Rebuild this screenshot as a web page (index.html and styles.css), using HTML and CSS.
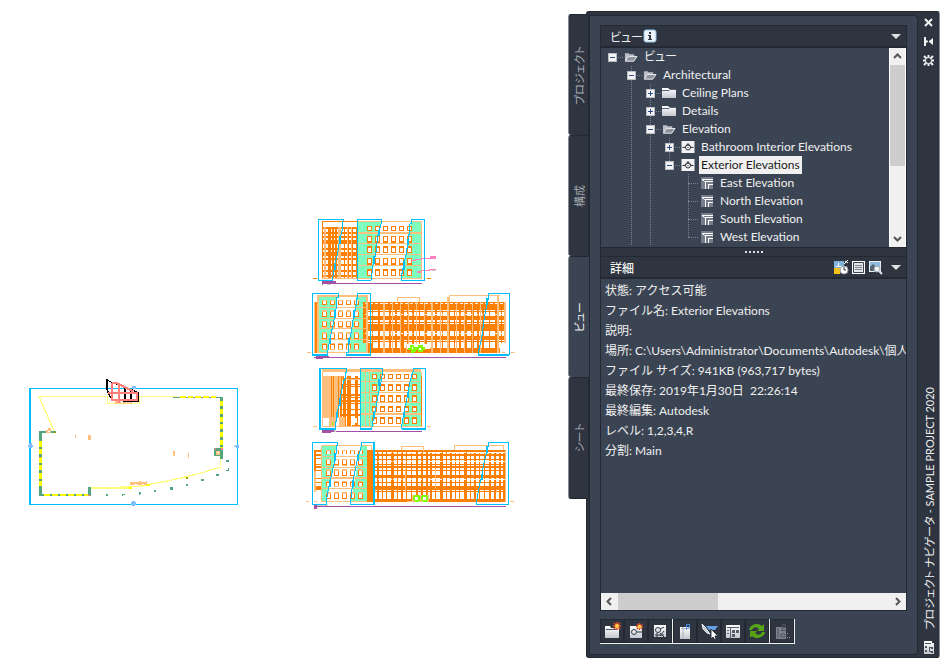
FILE: index.html
```
<!DOCTYPE html>
<html lang="ja">
<head>
  <meta charset="UTF-8">
  <meta name="viewport" content="width=device-width, initial-scale=1">
  <title>プロジェクト ナビゲータ - SAMPLE PROJECT 2020</title>
  <link rel="stylesheet" href="styles.css">
</head>
<body>

  <!-- shared icons -->
  <svg class="defs" width="0" height="0" aria-hidden="true">
    <linearGradient id="silver" x1="0" y1="0" x2="0" y2="1">
      <stop offset="0" stop-color="#fff"/>
      <stop offset="1" stop-color="#c4c8ce"/>
    </linearGradient>
    <symbol id="folder-open" viewBox="0 0 15 12">
      <path d="M1 10V2h4l1 1h5v2H5L2 10z" fill="#b9bec6"/>
      <path d="M1.500 10.500L4.500 5.500H14L10.500 10.500z" fill="#8d949f" stroke="#f0f1f3"/>
    </symbol>
    <symbol id="folder" viewBox="0 0 14 12">
      <path d="M0 1h6l1 1h7v9H0z" fill="url(#silver)"/>
      <path d="M0 3.500h7l1-1h6" stroke="#5b6370" fill="none"/>
    </symbol>
    <symbol id="view" viewBox="0 0 13 12">
      <path d="M0 0h13v12H0z" fill="#f2f2f2"/>
      <path d="M1 6.500h11" stroke="#2e3440"/>
      <path d="M3 6L6.500 2 10 6z" fill="#2e3440"/>
      <circle cx="6.500" cy="6.500" r="2.500" fill="#f2f2f2" stroke="#2e3440"/>
      <path d="M6 6h1v1H6z" fill="#2e3440"/>
    </symbol>
    <symbol id="named-view" viewBox="0 0 14 12">
      <path d="M1 0h12v12H1z" fill="#757d8a"/>
      <path d="M2 2h11v1H4v1h9v1H6v7H5V5L2 3zM8 7h5v1H9v4H8z" fill="#fff"/>
    </symbol>
    <symbol id="spark" viewBox="0 0 8 8">
      <path d="M4 0v8M0 4h8M1 1l6 6M7 1L1 7" stroke="#e8502a" stroke-width="1.500"/>
      <circle cx="4" cy="4" r="2" fill="#ffd24a"/>
    </symbol>

    <!-- rows of windows used by the elevations -->
    <symbol id="windows6" viewBox="0 0 140 24" overflow="visible" preserveAspectRatio="none">
      <path d="M1 12H140" stroke="#ff7f00" stroke-width="21" stroke-dasharray="15 9"/>
      <path d="M4 13H137" stroke="#fff" stroke-width="12" stroke-dasharray="9 15"/>
    </symbol>
    <symbol id="windows5" viewBox="0 0 116 24" overflow="visible" preserveAspectRatio="none">
      <path d="M1 12H116" stroke="#ffbf7f" stroke-width="21" stroke-dasharray="15 9"/>
      <path d="M1 14H116" stroke="#ff7f00" stroke-width="15" stroke-dasharray="15 9"/>
      <path d="M4 13H113" stroke="#fff" stroke-width="12" stroke-dasharray="9 15"/>
    </symbol>
  </svg>

  <main class="canvas">
    <svg class="plan" viewBox="0 0 690 435" role="img" aria-label="平面図">
      <path d="M55 80H265M357 80H470M57 80L104 187M602 265V291Q500 325 360 348" class="ly" stroke-width="4"/>
      <path d="M210 354H335M300 349H372" class="ly" stroke-width="5"/>
      <path d="M327 354H336M379 344H389M497 324H503" class="yl" stroke-width="6"/>
      <path d="M460 82H606" class="gr" stroke-width="4"/>
      <path d="M480 80H595" class="yl" stroke-width="5" stroke-dasharray="17 6"/>
      <path d="M604 80V268M592 234V258" class="gr" stroke-width="9"/>
      <path d="M582 246H600" class="gr" stroke-width="24"/>
      <path d="M604 94V234" class="yl" stroke-width="9" stroke-dasharray="15 8"/>
      <path d="M61 185V377M208 350V377" class="gr" stroke-width="9"/>
      <path d="M57 186H107M57 375H212" class="gr" stroke-width="6"/>
      <path d="M61 213V350" class="yl" stroke-width="9" stroke-dasharray="18 6 16 8"/>
      <path d="M72 375H205" class="yl" stroke-width="5" stroke-dasharray="17 7"/>
      <path d="M258 372h6v6h-6zM306 372h9v3h-6v3h-3zM357 366h6v6h-3v3h-3zM402 360h6v6h-6zM450 351h9v9h-9zM498 342h6v6h-6zM543 327h9v6h-9zM588 312h9v6h-9zM618 270h9v6h-9zM624 294h3v9h-9v-3h6z" fill="#55a57f"/>
      <path d="M84 174h9v14H78v-9h6zM165 195h3v9h-3zM204 195h9v15h-9zM459 243h6v15h-6zM504 249h3v15h-3zM588 243h12v12h-12zM330 336h27v-3h6v3h15v-3h3v12h-9v-4h-6v4h-15v-3h-6v3h-15z" fill="#ffbf7f"/>
      <path d="M591 246h6v3h-6zM84 183h6v3h-6z" fill="#fff"/>
      <path d="M585 234h3v6h-3zM603 234h6v6h-6zM204 375h6v3h-6zM57 261h6v3h-6z" fill="#ff7f7f"/>
      <path d="M498 321h6v6h-6zM102 186h6v3h-6z" fill="#9b9b00"/>
      <path d="M262 80V100H358V80" class="ly" stroke-width="4"/>
      <path d="M285 97H337" stroke="#ffbf7f" stroke-width="9" stroke-dasharray="9 5 4 5"/>
      <path d="M30 55V405" class="bl" stroke-width="6"/>
      <path d="M28 55H653V403H28" class="bl"/>
      <path d="M336 48h12v9h-12zM336 393h9v3h3v9h-3v3h-9v-3h-3v-9h3zM27 219h9v6h3v6h-3v3h-9v-3h-4v-6h4zM645 225h12v9h-9v-3h-6v-3h3z" fill="#7fbfff"/>
      <path d="M261 28V58L272 84M261 30L277 38L300 45L342 62L354 68V94H310M277 40V92M315 47V94M333 58V94M261 68H354" class="bk"/>
      <path d="M276 38V91H351V68H264M276 39H290L340 64M276 69H351M276 89H351M296 40V98" class="sa"/>
      <path d="M281 75h9v12h-9zM303 75h9v12h-9zM320 75h9v12h-9z" fill="#fff"/>
    </svg>

    <div class="elevations">
      <svg class="elevation" viewBox="0 0 645 225" role="img" aria-label="East Elevation">
        <path d="M157 36H228L200 206H157zM318 36H350V206H290z" class="green"/>
        <path d="M52 34V207M51 34H157M349 64V180" class="or"/>
        <path d="M54 53H157M54 68H157M54 81H157M54 116H157M54 148H157M54 164H157M54 184H157M54 199H157" class="or" stroke-width="6"/>
        <path d="M54 97H157M54 133H157" class="or" stroke-width="12"/>
        <path d="M84 50V207M93 50V207M118 50V207M130 50V207M142 50V207M154 50V207" class="or" stroke-width="4"/>
        <path d="M73 50V207" class="or" stroke-width="9"/>
        <path d="M60 50V207M104 50V207" class="lo" stroke-width="8"/>
        <path d="M127 50V207M139 50V207M51 206H350M157 35H350V207M160 100H350M160 133H350M160 166H350" class="lo"/>
        <path d="M160 69H350" class="lo" stroke-width="6"/>
        <use href="#windows6" x="185" y="46" width="140" height="18"/>
        <use href="#windows6" x="185" y="75" width="140" height="24"/>
        <use href="#windows6" x="185" y="107" width="140" height="24"/>
        <use href="#windows6" x="185" y="141" width="140" height="24"/>
        <use href="#windows6" x="185" y="175" width="140" height="24"/>
        <path d="M24 205H36M366 205H378" class="or"/>
        <path d="M51 220H350M52 211V225" class="pu"/>
        <path d="M54 213h39v6H54z" fill="#a54fa5"/>
        <path d="M66 222h12v3H66zM378 180h15v3h-15z" fill="#ccc"/>
        <path d="M318 152H330V149H350V146H375M348 182H372V179H393" class="pk"/>
        <path d="M375 138h18v9h-18zM336 183h12v6h-12z" fill="#ff7fbf"/>
        <path d="M116 34V29H40V211H83V205L90 160L97 135L104 90L113 54V34M157 211V29H230V34L218 80L212 136L206 150L198 211zM320 29H358V211H290V196L297 160L304 130L309 95L314 60V42L320 40z" class="bl"/>
        <path d="M104 78V101M90 162V179M222 60V78M206 139V162M309 86V106M297 153V180" class="bl" stroke-width="6"/>
      </svg>

      <svg class="elevation" viewBox="0 0 645 225" role="img" aria-label="North Elevation">
        <path d="M39 36H98L68 203H39zM154 36H184V203H128z" class="green"/>
        <path d="M175 54H603M175 78H603M175 94H603M175 111H603M175 137H603M184 168H603M184 190H584" class="or"/>
        <path d="M175 63H603M175 99H603M175 129H603M175 159H603M184 197H584" class="or" stroke-width="12"/>
        <path d="M175 53H603M175 71H603M175 121H603" class="or" stroke-width="6"/>
        <path d="M201 128H603" class="or" stroke-width="152" stroke-dasharray="4 14 7 11 4 10 6 14"/>
        <path d="M175 51h15v122h-15zM184 173h20v30h-20zM27 51h12v152H27z" fill="#ff7f00"/>
        <path d="M180 56H603M180 89H603M180 146H603" stroke="#fff" stroke-width="3" stroke-dasharray="9 6"/>
        <path d="M237 51V203M382 51V203M430 36V203M580 30V203M600 51V173" class="lo" stroke-width="6"/>
        <path d="M28 51V203M261 51V203M286 51V203M310 51V180M334 51V180M358 51V180M407 51V203M455 51V203M478 51V203M503 51V203M527 51V203M277 51V38H344V51M433 51V32H584" class="lo"/>
        <path d="M588 175h18v30h-18z" fill="#fff"/>
        <path d="M37 33H186M186 30V203M38 30V203" class="lo" stroke-width="6"/>
        <path d="M39 67H184M39 99H184M39 131H184M39 163H184M39 202H184" class="lo"/>
        <use href="#windows5" x="50" y="44" width="116" height="17"/>
        <use href="#windows5" x="50" y="74" width="116" height="24"/>
        <use href="#windows5" x="50" y="105" width="116" height="24"/>
        <use href="#windows5" x="50" y="140" width="116" height="24"/>
        <use href="#windows5" x="50" y="172" width="116" height="24"/>
        <path d="M6 202H18M590 202H600M618 202H630" class="lo"/>
        <path d="M306 178h69v14h-69z" fill="#fff"/>
        <path d="M305 203V179" class="lo"/>
        <path d="M315 180h12v5h6v15h-6v3h-9v-9h-9v-6h6zM339 180h15v5h6v9h-6v8h-15v-8h-6v-9h6z" fill="#7fff00"/>
        <path d="M321 186h4v6h-4zM342 188h6v6h-6z" fill="#fff"/>
        <path d="M27 217H603" class="pu"/>
        <path d="M33 213h39v3H54v6H33z" fill="#a54fa5"/>
        <path d="M101 36V25H22V208H68V202L75 160L83 125L90 90L95 60V36zM157 25H196V211H124V202H130V178L139 140L145 100L154 60V42L157 40zM550 25H613V208H520V202L530 160L535 120L541 80L550 40z" class="bl"/>
        <path d="M22 209H70M124 209H197M520 209H613M90 75V99M75 158V178M147 75V98M132 158V178M546 40V60" class="bl" stroke-width="6"/>
      </svg>

      <svg class="elevation" viewBox="0 0 645 225" role="img" aria-label="South Elevation">
        <g transform="translate(0 6)">
          <path d="M167 30H233L205 194H167zM322 30H348V194H290z" class="green"/>
          <path d="M51 42H115L95 166H51z" fill="#ffbf7f"/>
          <path d="M79 42V166M85 42V166M100 42V166M105 85V194M109 42V194M115 42V194M112 50H166M112 67H166M112 72H166M112 107H166M112 125H166M112 142H166M349 42V194" class="or"/>
          <path d="M118 49V194M154 42V194M112 98H166M112 117H166M112 158H166M82 166V194" class="or" stroke-width="7"/>
          <path d="M132 42V194" class="or" stroke-width="10"/>
          <path d="M54 165h38v30H54zM103 165h18v30h-18z" fill="#ffbf7f"/>
          <path d="M54 168h18v24H54z" fill="#fff"/>
          <path d="M140 168h16v14h-16z" fill="#fff"/>
          <path d="M141 188h25v7h-25z" fill="#ff7f00"/>
          <path d="M82 179V194" stroke="#7fff00" stroke-width="3"/>
          <path d="M51 26H348" class="lo" stroke-width="8"/>
          <path d="M52 30V194M51 193H350M182 30V194M192 30V194M125 52H166M349 30V42" class="lo"/>
          <path d="M167 59H348M167 92H348M167 122H348M167 156H348" class="lo" stroke-width="4"/>
          <use href="#windows6" x="200" y="36" width="140" height="15"/>
          <use href="#windows6" x="200" y="66" width="140" height="21"/>
          <use href="#windows6" x="200" y="99" width="140" height="21"/>
          <use href="#windows6" x="200" y="131" width="140" height="20"/>
          <use href="#windows6" x="200" y="164" width="140" height="24"/>
          <path d="M24 193H36M366 193H378" class="lo"/>
          <path d="M93 208H350" class="pu"/>
          <path d="M51 204h36v6h-9v3H51z" fill="#a54fa5"/>
          <path d="M87 204h6v6h-6z" fill="#ccc"/>
          <path d="M125 30V19H45V200H91V193L97 150L103 125L109 90L115 60L122 45V30zM167 200V19H233V30L228 60L218 105L212 140L205 170L200 200zM324 19H361V200H290V193L297 150L304 120L309 90L314 65L320 40L324 30z" class="bl"/>
          <path d="M45 18V202M43 201H92M166 201H201M290 201H362M104 108V132M97 150V168M222 50V72M208 149V168M309 89V108M297 150V168" class="bl" stroke-width="6"/>
        </g>
      </svg>

      <svg class="elevation" viewBox="0 0 645 225" role="img" aria-label="West Elevation">
        <g transform="translate(0 3)">
          <path d="M50 28H95L66 194H50zM168 28H186V194H138z" class="green"/>
          <path d="M186 69H603M186 84H603M186 103H603M186 125H603M186 140H603M186 165H603M33 67H50M33 84H50M33 103H50M33 126H50M33 139H50" class="or"/>
          <path d="M27 45H50M186 45H603M186 57H603M186 92H603M186 119H603M27 92H50M27 57H50" class="or" stroke-width="7"/>
          <path d="M186 156H603M27 156H50M204 193H603" class="or" stroke-width="11"/>
          <path d="M203 119H603" class="or" stroke-width="154" stroke-dasharray="4 9 6 8 4 10 3 12 8 9"/>
          <path d="M186 42h20v155h-20zM27 42h6v80h-6z" fill="#ff7f00"/>
          <path d="M205 49H603M205 75H603M205 131H603" stroke="#fff" stroke-width="3" stroke-dasharray="9 4 12 5"/>
          <path d="M30 105V168" class="lo" stroke-width="5"/>
          <path d="M289 42V32H355V44M448 42V29H596V42M302 100V158M392 100V158M602 42V197M50 29H200V42M50 29V196H186" class="lo"/>
          <path d="M50 62H186M50 93H186M50 156H186" class="lo"/>
          <path d="M50 126H186" class="lo" stroke-width="6"/>
          <use href="#windows5" x="62" y="40" width="116" height="16"/>
          <use href="#windows5" x="62" y="66" width="116" height="24"/>
          <use href="#windows5" x="62" y="99" width="116" height="22"/>
          <use href="#windows5" x="62" y="134" width="116" height="19"/>
          <use href="#windows5" x="62" y="166" width="116" height="26"/>
          <path d="M3 196H12M27 196H36M306 196H322M615 196H627" class="lo"/>
          <path d="M321 177h51v20h-51z" fill="#ffbf7f"/>
          <circle cx="335" cy="187" r="8" fill="#fff" stroke="#7fff00" stroke-width="6"/>
          <circle cx="359" cy="187" r="8" fill="#fff" stroke="#7fff00" stroke-width="6"/>
          <path d="M69 211H603" class="pu"/>
          <path d="M33 208h36" stroke="#ccc" stroke-width="3"/>
          <path d="M27 208h9v10h-9zM36 210h33v3H36z" fill="#a54fa5"/>
          <path d="M98 28V19H22V205H64V194L72 150L79 120L90 70L95 45V28zM171 19H207V205H137V194L141 160L147 120L155 80L162 55L169 30zM550 19H610V205H515V194L523 150L530 120L537 80L546 45L550 30z" class="bl"/>
          <path d="M207 19V207M90 52V74M75 132V152M160 54V76M145 133V152M546 30V50M530 113V132" class="bl" stroke-width="6"/>
        </g>
      </svg>
    </div>
  </main>

  <aside class="palette">
    <nav class="tabs">
      <button type="button" class="tab"><span class="upright">プロジェクト</span></button>
      <button type="button" class="tab"><span class="upright">構成</span></button>
      <button type="button" class="tab active"><span class="upright">ビュー</span></button>
      <button type="button" class="tab"><span class="upright">シート</span></button>
    </nav>

    <div class="frame">
      <div class="content">
        <section class="views">
          <header class="bar">
            <h2 class="kana">ビュー</h2>
            <svg class="info" viewBox="0 0 14 14"><rect x="1" y="1" width="12" height="12" rx="2" fill="#eef4fa" stroke="#8ec3ea" stroke-width="1"/><path d="M6 3h2v2H6zM5 6h3v4h1v1H5v-1h1V7H5z" fill="#333a46"/></svg>
            <button type="button" class="drop" aria-label="メニュー"></button>
          </header>
          <div class="tree-box">
            <ul class="tree">
              <li>
                <div class="row"><button type="button" class="toggle open" aria-label="閉じる"></button><i></i><svg class="icon"><use href="#folder-open"/></svg><a href="#" class="kana">ビュー</a></div>
                <ul>
                  <li>
                    <div class="row"><button type="button" class="toggle open" aria-label="閉じる"></button><i></i><svg class="icon"><use href="#folder-open"/></svg><a href="#">Architectural</a></div>
                    <ul>
                      <li><div class="row"><button type="button" class="toggle" aria-label="開く"></button><i></i><svg class="icon"><use href="#folder"/></svg><a href="#">Ceiling Plans</a></div></li>
                      <li><div class="row"><button type="button" class="toggle" aria-label="開く"></button><i></i><svg class="icon"><use href="#folder"/></svg><a href="#">Details</a></div></li>
                      <li>
                        <div class="row"><button type="button" class="toggle open" aria-label="閉じる"></button><i></i><svg class="icon"><use href="#folder-open"/></svg><a href="#">Elevation</a></div>
                        <ul>
                          <li><div class="row"><button type="button" class="toggle" aria-label="開く"></button><i></i><svg class="icon"><use href="#view"/></svg><a href="#">Bathroom Interior Elevations</a></div></li>
                          <li class="last">
                            <div class="row"><button type="button" class="toggle open" aria-label="閉じる"></button><i></i><svg class="icon"><use href="#view"/></svg><a href="#" class="selected">Exterior Elevations</a></div>
                            <ul>
                              <li><div class="row leaf"><i></i><svg class="icon"><use href="#named-view"/></svg><a href="#">East Elevation</a></div></li>
                              <li><div class="row leaf"><i></i><svg class="icon"><use href="#named-view"/></svg><a href="#">North Elevation</a></div></li>
                              <li><div class="row leaf"><i></i><svg class="icon"><use href="#named-view"/></svg><a href="#">South Elevation</a></div></li>
                              <li class="last"><div class="row leaf"><i></i><svg class="icon"><use href="#named-view"/></svg><a href="#">West Elevation</a></div></li>
                            </ul>
                          </li>
                        </ul>
                      </li>
                    </ul>
                  </li>
                </ul>
              </li>
            </ul>
            <div class="scroll vertical">
              <button type="button" aria-label="上へ"><svg viewBox="0 0 9 9"><path d="M1 6l3.500-3.500L8 6"/></svg></button>
              <div class="thumb"></div>
              <button type="button" aria-label="下へ"><svg viewBox="0 0 9 9"><path d="M1 3l3.500 3.500L8 3"/></svg></button>
            </div>
          </div>
        </section>

        <div class="splitter"><b></b><b></b><b></b><b></b><b></b></div>

        <section class="details">
          <header class="bar">
            <h2>詳細</h2>
            <div class="tools">
              <button type="button" aria-label="外部参照"><svg viewBox="0 0 15 15"><path d="M0 1h10v8H0z" fill="#7fb4dc"/><path d="M0 8h6v6H0z" fill="#f3c31c"/><path d="M3 6h1V3h1v3h3v1H1z" fill="#fff"/><path d="M10 4l4-4M11 1l3 2" stroke="#fff"/><circle cx="10" cy="10" r="4" fill="#fff" stroke="#999ea6"/><path d="M10 7v3h2" stroke="#333" fill="none"/></svg></button>
              <button type="button" aria-label="詳細"><svg viewBox="0 0 15 15"><path d="M1 1h13v13H1z" fill="#fff"/><path d="M2.500 2.500h10v10h-10z" fill="#e4e6e9" stroke="#39414e"/><path d="M4 5.500h7M4 7.500h7M4 9.500h7" stroke="#7b828d"/></svg></button>
              <button type="button" aria-label="プレビュー"><svg viewBox="0 0 15 15"><path d="M1 1h12v11H1z" fill="#e8edf2"/><path d="M2 2h10v5H2z" fill="#8fbbe0"/><path d="M2 11V7l3-3 4 4 1 3z" fill="#566170"/><circle cx="9" cy="9" r="3" fill="#eef1f4" stroke="#9aa0a9"/><path d="M11 11l3 3" stroke="#dfe2e6" stroke-width="2"/></svg></button>
            </div>
            <button type="button" class="drop" aria-label="メニュー"></button>
          </header>
          <div class="info-box">
            <p>状態: アクセス可能</p>
            <p>ファイル名: Exterior Elevations</p>
            <p>説明:</p>
            <p>場所: C:\Users\Administrator\Documents\Autodesk\個人</p>
            <p>ファイル サイズ: 941KB (963,717 bytes)</p>
            <p>最終保存: 2019年1月30日&nbsp; 22:26:14</p>
            <p>最終編集: Autodesk</p>
            <p>レベル: 1,2,3,4,R</p>
            <p>分割: Main</p>
          </div>
          <div class="scroll horizontal">
            <button type="button" aria-label="左へ"><svg viewBox="0 0 9 9"><path d="M6 1L2.500 4.500 6 8"/></svg></button>
            <div class="thumb"></div>
            <button type="button" aria-label="右へ"><svg viewBox="0 0 9 9"><path d="M3 1l3.500 3.500L3 8"/></svg></button>
          </div>
        </section>

        <footer class="toolbar">
          <div class="group">
            <button type="button" aria-label="カテゴリを追加"><svg viewBox="0 0 18 18"><path d="M2 4h5l1 2h8v10H2z" fill="url(#silver)"/><path d="M3 7.500h11" stroke="#555d69"/><use href="#spark" x="10" y="0" width="8" height="8"/></svg></button>
            <button type="button" aria-label="ビュー図面を追加"><svg viewBox="0 0 18 18"><path d="M3 4h12v12H3z" fill="url(#silver)"/><circle cx="7" cy="10" r="2.500" fill="none" stroke="#333a46"/><path d="M10 10h5" stroke="#333a46"/><use href="#spark" x="9" y="1" width="7" height="7"/></svg></button>
            <button type="button" aria-label="コールアウト"><svg viewBox="0 0 18 18"><path d="M3 3h12v12H3z" fill="url(#silver)"/><circle cx="7" cy="8" r="2.500" fill="none" stroke="#333a46"/><path d="M9 7l4-2M4 13h9M6 11v4M9 11l4 4M13 9l-4 5" stroke="#333a46"/></svg></button>
          </div>
          <div class="group">
            <button type="button" aria-label="シートに追加"><svg viewBox="0 0 18 18"><path d="M4 5h10v12H4z" fill="url(#silver)"/><path d="M5 6.500h8M7 5v11" stroke="#aab2be"/><path d="M10.500 8V2.500h3V6h-2" fill="none" stroke="#4a92ea"/></svg></button>
            <button type="button" aria-label="選択"><svg viewBox="0 0 18 18"><path d="M2 2l3 3 5 7-3-1-4-4z" fill="#c4c9d0" stroke="#eef0f2"/><path d="M6 4h12l-3 4H9z" fill="#64a0e4"/><path d="M11 7v10l2-2 2 3 1-1-1-3h3z" fill="#fff" stroke="#2e3440"/></svg></button>
            <button type="button" aria-label="パレット"><svg viewBox="0 0 18 18"><path d="M2 3h14v13H2z" fill="url(#silver)"/><path d="M3 5.500h12M6.500 6v10" stroke="#565f6c"/><path d="M3 8h2v1H3zM3 11h2v1H3zM8 8h3v3H8zM12 8h3v3h-3zM8 12h3v3H8z" fill="#565f6c"/></svg></button>
            <button type="button" aria-label="更新"><svg viewBox="0 0 18 18"><path d="M1 8c1-6 9-8 13-4l2-2v7h-7l2-2C8 4 5 5 4 8z" fill="#58a417"/><path d="M17 10c-1 6-9 8-13 4l-2 2V9h7l-2 2c3 3 6 2 7-1z" fill="#58a417"/></svg></button>
          </div>
          <div class="group">
            <button type="button" aria-label="シートを作成" disabled><svg viewBox="0 0 18 18"><path d="M3 5h10v12H3z" fill="#7c838d"/><path d="M5 6v10M8 8.500h5M8 12h4v3H8zM9.500 8V2.500h3V6h-2" fill="none" stroke="#4b535f"/><path d="M12 13h1v1h-1zM14 11h1v1h-1zM14 15h1v1h-1zM16 15h1v1h-1z" fill="#9097a0"/></svg></button>
          </div>
        </footer>
      </div>

      <div class="titlebar">
        <button type="button" aria-label="閉じる"><svg viewBox="0 0 11 11"><path d="M2 2l7 7M9 2L2 9" stroke="#f2f2f2" stroke-width="2"/></svg></button>
        <button type="button" aria-label="自動的に隠す"><svg viewBox="0 0 11 11"><path d="M1 1h2v3l2 1v1L3 7v3H1zM10 2v7L6 6V5z" fill="#f2f2f2"/></svg></button>
        <button type="button" aria-label="プロパティ"><svg viewBox="0 0 11 11"><path d="M5.500 0v11M0 5.500h11M1 1l9 9M10 1l-9 9" stroke="#f2f2f2" stroke-width="2"/><circle cx="5.500" cy="5.500" r="3" fill="#2e3440" stroke="#f2f2f2" stroke-width="1"/></svg></button>
        <h1><span class="upright">プロジェクト ナビゲータ - SAMPLE PROJECT 2020</span></h1>
        <svg class="logo" viewBox="0 0 11 15"><path d="M1 1h8v2h2v11H1z" fill="url(#silver)"/><path d="M2 3.500h6M6.500 7v5M6 7.500h3M6 11.500h3" stroke="#4b535f"/><path d="M2 6h2v2H2zM2 10h2v2H2zM8 7h2v2H8zM8 11h2v2H8z" fill="#4b535f"/></svg>
      </div>
    </div>
  </aside>

</body>
</html>
```

FILE: styles.css
```
* {
  box-sizing: border-box;
}

body {
  margin: 0;
  height: 100vh;
  display: flex;
  overflow: hidden;
  background-color: #fff;
  font-family: Lato, "Noto Sans CJK JP", sans-serif;
  font-size: 12px;
  color: #f0f0f0;
}

h1,
h2,
p,
ul {
  margin: 0;
  padding: 0;
  font-size: 12px;
  font-weight: normal;
}

button {
  display: flex;
  align-items: center;
  justify-content: center;
  padding: 0;
  border: none;
  background: none;
  color: inherit;
  font: inherit;
}

.defs {
  position: absolute;
}

.kana,
.upright {
  font-feature-settings: "palt";
}

/* drawing area */
.canvas {
  flex: 1;
  min-width: 0;
  display: flex;
  align-items: center;
  gap: 55px;
  padding: 54px 0 0 20px;
  overflow: hidden;
}

.plan {
  flex: none;
  width: 230px;
  height: 145px;
  margin-top: 164px;
}

.elevations {
  display: flex;
  flex-direction: column;
}

.elevation {
  width: 215px;
  height: 75px;
}

.canvas svg {
  fill: none;
  stroke-width: 3px;
  shape-rendering: crispEdges;
}

.green {
  fill: #7fffbf;
}

.or {
  stroke: #ff7f00;
}

.lo {
  stroke: #ffbf7f;
}

.bl {
  stroke: #00bfff;
}

.pu {
  stroke: #a54fa5;
}

.pk {
  stroke: #ff7fbf;
}

.ly {
  stroke: #ffff7f;
}

.yl {
  stroke: #ffff00;
}

.gr {
  stroke: #55a57f;
}

.bk {
  stroke: #000;
  stroke-width: 4px;
}

.sa {
  stroke: #ff7f7f;
  stroke-width: 6px;
}

/* palette */
.palette {
  flex: 0 0 372px;
  min-width: 0;
  display: flex;
  margin: 11px 6px 8px 0;
}

.tabs {
  width: 21px;
  margin: 3px -3px 0 0;
  z-index: 1;
}

.tab {
  width: 21px;
  height: 121px;
  background-color: #2e3440;
  border: 1px solid #222933;
  border-bottom: none;
  border-left-color: #878b91;
  border-radius: 3px 0 0 3px;
  color: #a6abb3;
  font-size: 11px;
}

.tab:last-child {
  height: 122px;
  border-bottom: 1px solid #222933;
}

.tab.active {
  background-color: #3b4453;
  border-right-color: #3b4453;
  color: #f0f0f0;
}

.upright {
  writing-mode: vertical-rl;
  text-orientation: sideways;
  transform: rotate(180deg);
  white-space: nowrap;
}

.frame {
  flex: 1;
  min-width: 0;
  display: flex;
  padding: 3px 0 2px 2px;
  background-color: #2e3440;
  border: 1px solid #222933;
  border-right-color: #878b91;
  border-radius: 3px;
}

.content {
  flex: 1;
  min-width: 0;
  display: flex;
  flex-direction: column;
  padding: 9px 10px 10px;
  background-color: #3b4453;
  border: 1px solid #222933;
  border-radius: 0 4px 4px 0;
}

.bar {
  display: flex;
  align-items: center;
  height: 23px;
  padding: 0 5px 0 9px;
  background-color: #2e3440;
  border: 1px solid #222933;
  border-bottom-width: 2px;
}

.info {
  width: 14px;
  height: 14px;
}

.drop {
  width: 10px;
  height: 16px;
  margin-left: auto;
}

.drop::before {
  content: "";
  border: 5px solid transparent;
  border-top-color: #e0e0e0;
  border-bottom: none;
}

.tree-box {
  display: flex;
  height: 200px;
  border: solid #222933;
  border-width: 0 1px 1px;
}

.tree {
  flex: 1;
  padding-left: 7px;
  overflow: hidden;
}

.tree ul {
  padding-left: 19px;
}

.tree li {
  list-style: none;
}

/* dotted guide down the middle of the toggles */
.tree li li {
  background: repeating-linear-gradient(#7b818a 0 1px, transparent 1px 2px) 4px 0 / 1px 100% no-repeat;
}

.tree li.last {
  background-size: 1px 9px;
}

.row {
  display: flex;
  align-items: center;
  height: 18px;
}

.row i {
  width: 5px;
  margin: 0 1px;
  border-top: 1px dotted #7b818a;
}

.row.leaf i {
  width: 10px;
  margin: 0 2px 0 4px;
}

.toggle {
  width: 9px;
  height: 9px;
  background: linear-gradient(#2f4a8c, #2f4a8c) center / 5px 1px no-repeat,
    linear-gradient(#2f4a8c, #2f4a8c) center / 1px 5px no-repeat, #f4f4f4;
  border: 1px solid #b9bdc3;
}

.toggle.open {
  background: linear-gradient(#2f4a8c, #2f4a8c) center / 5px 1px no-repeat, #f4f4f4;
}

.icon {
  width: 14px;
  height: 12px;
  margin-right: 4px;
}

.row a {
  padding: 0 2px;
  line-height: 18px;
  color: inherit;
  text-decoration: none;
  white-space: nowrap;
}

.row a.selected {
  background-color: #f0f0f0;
  color: #1a1a1a;
}

.scroll {
  display: flex;
  background-color: #f0f0f0;
}

.scroll button {
  flex: 0 0 17px;
}

.scroll svg {
  width: 9px;
  height: 9px;
  fill: none;
  stroke: #555;
  stroke-width: 2px;
}

.scroll .thumb {
  background-color: #cdcdcd;
}

.vertical {
  flex-direction: column;
  width: 17px;
  border: solid #fff;
  border-width: 0 1px;
}

.vertical .thumb {
  height: 101px;
}

.horizontal {
  height: 18px;
  border: 1px solid #222933;
  border-top: none;
}

.horizontal .thumb {
  width: 100px;
}

.scroll button:last-child {
  margin: auto 0 0;
}

.horizontal button:last-child {
  margin: 0 0 0 auto;
}

.splitter {
  display: flex;
  align-items: center;
  justify-content: center;
  gap: 2px;
  height: 8px;
  background-color: #2e3440;
  border: solid #222933;
  border-width: 0 1px;
}

.splitter b {
  width: 2px;
  height: 2px;
  background-color: #e0e0e0;
}

.details {
  flex: 1;
  min-height: 0;
  display: flex;
  flex-direction: column;
}

.details h2 {
  font-weight: 500;
}

.tools {
  display: flex;
  gap: 2px;
  margin-left: auto;
}

.tools svg {
  width: 15px;
  height: 15px;
}

.details .drop {
  margin-left: 8px;
}

.info-box {
  flex: 1;
  padding: 2px 0 0 4px;
  border: solid #222933;
  border-width: 0 1px;
  overflow: hidden;
}

.info-box p {
  height: 20px;
  line-height: 20px;
  white-space: pre;
}

.toolbar {
  display: flex;
  align-self: flex-start;
  margin-top: 8px;
  border-bottom: 1px solid #f0f0f0;
}

.group {
  display: flex;
  border-right: 1px solid #f0f0f0;
}

.group button {
  width: 24px;
  height: 24px;
  background-color: #2e3440;
  border: 1px solid #222933;
}

.group svg {
  width: 18px;
  height: 18px;
}

.titlebar {
  flex: 0 0 21px;
  display: flex;
  flex-direction: column;
  align-items: center;
  gap: 8px;
  padding-top: 2px;
}

.titlebar button,
.titlebar button svg {
  width: 11px;
  height: 11px;
}

.titlebar h1 {
  margin-top: auto;
  font-size: 11px;
}

.logo {
  width: 11px;
  height: 15px;
}
```
